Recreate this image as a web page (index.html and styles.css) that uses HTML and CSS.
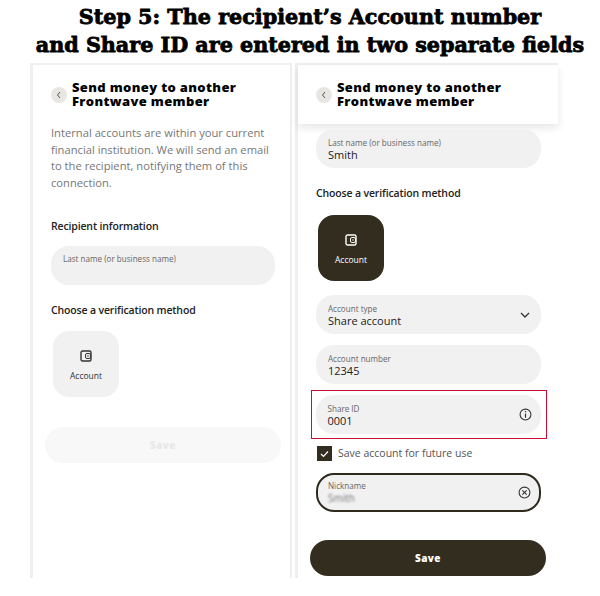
FILE: index.html
```html
<!DOCTYPE html>
<html lang="en">
  <head>
    <meta charset="UTF-8" />
    <title>Step 5</title>
    <link rel="stylesheet" href="styles.css">
  </head>
  <body>
    <h1 class="step-title">Step 5: The recipient’s Account number<br>and Share ID are entered in two separate fields</h1>
    <div class="screens">
      <!-- left phone -->
      <section class="screen">
        <header class="screen-head">
          <span class="back">
            <svg width="6" height="8" viewBox="0 0 6 8"><path d="M4 1 1.5 4 4 7" fill="none" stroke="#555" stroke-width="1"/></svg>
          </span>
          <h2>Send money to another<br>Frontwave member</h2>
        </header>
        <p class="intro">Internal accounts are within your current financial institution. We will send an email to the recipient, notifying them of this connection.</p>
        <h3 class="sub recipient">Recipient information</h3>
        <div class="field empty"><label>Last name (or business name)</label></div>
        <h3 class="sub method">Choose a verification method</h3>
        <div class="tile">
          <svg width="12" height="12" viewBox="0 0 12 12"><rect x="1" y="1" width="10" height="10" rx="1.5" fill="none" stroke="#333" stroke-width="1.4"/><rect x="5.5" y="3.5" width="5" height="5" rx="1.5" fill="none" stroke="#333"/><circle cx="8" cy="6" r=".8" fill="#333"/></svg>
          <span>Account</span>
        </div>
        <button class="save off">Save</button>
      </section>

      <!-- right phone -->
      <section class="screen scrolled">
        <header class="screen-head stuck">
          <span class="back">
            <svg width="6" height="8" viewBox="0 0 6 8"><path d="M4 1 1.5 4 4 7" fill="none" stroke="#555" stroke-width="1"/></svg>
          </span>
          <h2>Send money to another<br>Frontwave member</h2>
        </header>
        <div class="field"><label>Last name (or business name)</label><div class="val">Smith</div></div>
        <h3 class="sub method2">Choose a verification method</h3>
        <div class="tile on">
          <svg width="12" height="12" viewBox="0 0 12 12"><rect x="1" y="1" width="10" height="10" rx="1.5" fill="none" stroke="#fff" stroke-width="1.4"/><rect x="5.5" y="3.5" width="5" height="5" rx="1.5" fill="none" stroke="#fff"/><circle cx="8" cy="6" r=".8" fill="#fff"/></svg>
          <span>Account</span>
        </div>
        <div class="field gap-top">
          <label>Account type</label><div class="val">Share account</div>
          <svg class="field-icon chevron" width="10" height="6" viewBox="0 0 10 6"><path d="M1 1 5 5 9 1" fill="none" stroke="#333" stroke-width="1.3"/></svg>
        </div>
        <div class="field gap-11"><label>Account number</label><div class="val">12345</div></div>
        <div class="red-box">
          <div class="field">
            <label>Share ID</label><div class="val">0001</div>
            <svg class="field-icon" width="13" height="13" viewBox="0 0 12 12"><circle cx="6" cy="6" r="5" fill="none" stroke="#333"/><path d="M6 5.2V9" stroke="#333" stroke-width="1.1"/><circle cx="6" cy="3.4" r=".7" fill="#333"/></svg>
          </div>
        </div>
        <div class="check-row">
          <span class="check">
            <svg width="9" height="8" viewBox="0 0 9 8"><path d="M1 4 3.5 6.5 8 1.5" fill="none" stroke="#fff" stroke-width="1.2"/></svg>
          </span>
          Save account for future use
        </div>
        <div class="field focused">
          <label>Nickname</label><div class="val blur">Smith</div>
          <svg class="field-icon" width="13" height="13" viewBox="0 0 12 12"><circle cx="6" cy="6" r="5" fill="none" stroke="#333"/><path d="M4 4 8 8M8 4 4 8" stroke="#333"/></svg>
        </div>
        <button class="save">Save</button>
      </section>
    </div>
  </body>
</html>
```

FILE: styles.css
```css
* {
  box-sizing: border-box;
}

body {
  margin: 0;
  background: #fff;
  font-family: "Open Sans", sans-serif;
  color: #222;
}

.step-title {
  margin: 0;
  padding: 3px 0 0 20px;
  height: 63px;
  font-family: "DejaVu Serif", serif;
  font-weight: 900;
  font-size: 20.7px;
  line-height: 28px;
  text-align: center;
  white-space: nowrap;
  color: #000;
  -webkit-text-stroke: 0.8px #000;
}

.screens {
  display: flex;
  gap: 3px;
  padding-left: 30px;
}

.screen {
  width: 262px;
  height: 515px;
  padding: 0 15px 0 18px;
  border-top: 2px solid #efefef;
  border-left: 3px solid #efefef;
  border-right: 2px solid #efefef;
}

.scrolled {
  width: 263px;
  border-right: 0;
}

.screen-head {
  display: flex;
  align-items: center;
  gap: 5px;
  padding-top: 15px;
}

.stuck {
  margin: 0 -15px 0 -18px;
  padding: 14px 15px 15px 18px;
  height: 59px;
  box-shadow: 0 4px 8px rgba(0, 0, 0, 0.1);
}

.back {
  display: flex;
  align-items: center;
  justify-content: center;
  flex: none;
  width: 16px;
  height: 16px;
  margin-top: 2px;
  border-radius: 50%;
  background: #e8e6e3;
}

.screen-head h2 {
  margin: 0;
  font-size: 13px;
  line-height: 14px;
  font-weight: 800;
  color: #000;
  letter-spacing: 0.35px;
}

.intro {
  margin: 17px 0 0;
  font-size: 11.2px;
  line-height: 16.5px;
  color: #777;
}

.sub {
  margin: 0;
  font-size: 10.5px;
  line-height: 16px;
  font-weight: 600;
  letter-spacing: -0.15px;
  color: #222;
}

.recipient {
  margin-top: 27px;
}

.method {
  margin-top: 17px;
}

.method2 {
  margin-top: 17px;
}

.field {
  position: relative;
  height: 39px;
  padding: 8px 12px 0;
  border-radius: 18px;
  background: #f1f1f1;
}

.empty {
  margin-top: 12px;
  padding-top: 7px;
}

.scrolled .field {
  width: 225px;
}

.scrolled > .field:first-of-type {
  margin-top: 5px;
}

.gap-top {
  margin-top: 14px;
}

.gap-11 {
  margin-top: 11px;
}

.field label {
  display: block;
  font-size: 8.1px;
  line-height: 11px;
  color: #666;
}

.val {
  font-size: 11px;
  line-height: 14px;
  color: #222;
}

.blur {
  filter: blur(1.2px);
  font-size: 10px;
  color: #777;
}

.field-icon {
  position: absolute;
  right: 9px;
  top: 13px;
}

.chevron {
  right: 11px;
  top: 17px;
}

.focused {
  margin-top: 12px;
  border: 2px solid #2f2a1e;
  padding: 5px 10px 0;
}

.focused .field-icon {
  right: 8px;
  top: 11px;
}

.tile {
  display: flex;
  flex-direction: column;
  align-items: center;
  justify-content: center;
  gap: 8px;
  width: 66px;
  height: 66px;
  margin: 13px 0 0 2px;
  padding-top: 2px;
  border-radius: 16px;
  background: #f1f1f1;
  font-size: 8.5px;
  color: #333;
}

.tile.on {
  margin-top: 14px;
  background: #332d20;
  color: #fff;
}

.red-box {
  width: 236px;
  height: 49px;
  margin: 6px 0 0 -5px;
  padding: 3.5px;
  border: 1.5px solid #c8102e;
}

.check-row {
  display: flex;
  align-items: center;
  gap: 6px;
  margin: 7px 0 0 1px;
  font-size: 10.5px;
  line-height: 15px;
  color: #555;
}

.check {
  display: flex;
  align-items: center;
  justify-content: center;
  width: 15px;
  height: 15px;
  background: #332d20;
}

.save {
  display: block;
  width: 236px;
  height: 36px;
  margin: 28px 0 0 -6px;
  border: 0;
  border-radius: 18px;
  background: #332d20;
  color: #fff;
  font-family: inherit;
  font-size: 10px;
  font-weight: 800;
  letter-spacing: 0.4px;
}

.save.off {
  margin-top: 30px;
  background: #f8f8f8;
  color: #e8e8e8;
}
```
